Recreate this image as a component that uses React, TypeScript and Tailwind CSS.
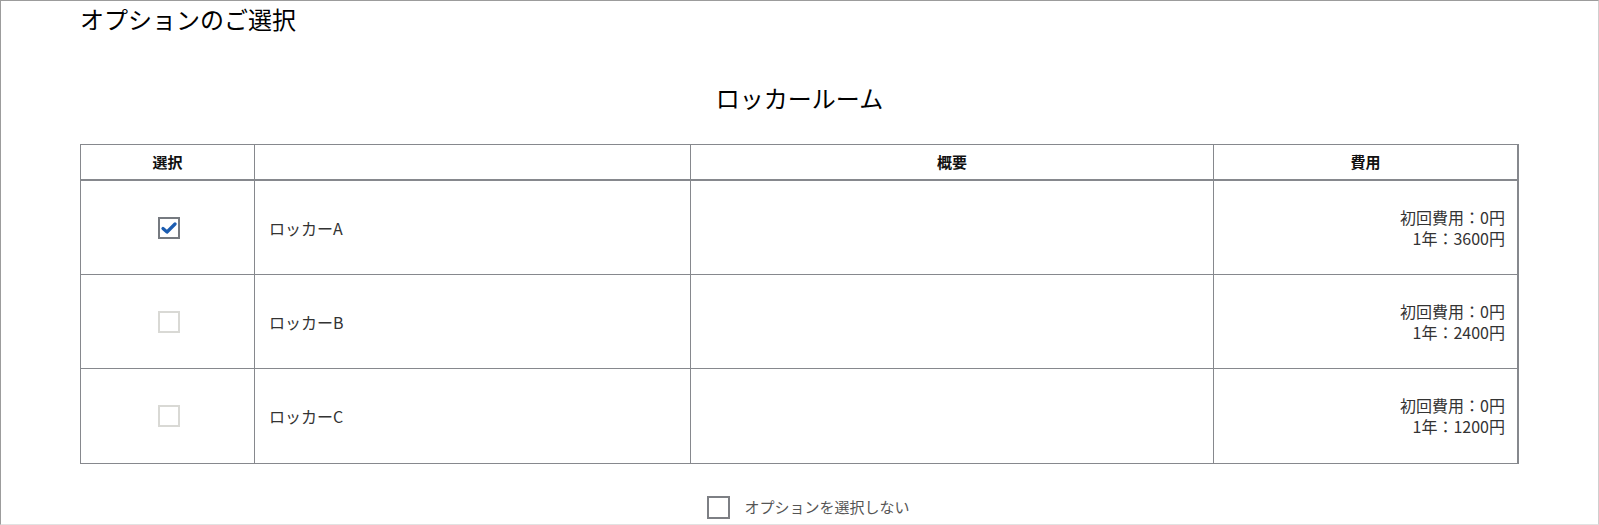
import React from "react";

const lockers = [
  { name: "ロッカーA", checked: true, yearly: "3600" },
  { name: "ロッカーB", checked: false, yearly: "2400" },
  { name: "ロッカーC", checked: false, yearly: "1200" },
];

function CheckBox({ checked }: { checked: boolean }) {
  if (checked) {
    return (
      <span className="flex h-[22px] w-[22px] items-center justify-center border-2 border-[#767a80] bg-white">
        <svg width="16" height="14" viewBox="0 0 16 14" fill="none">
          <path
            d="M2 7.5 L6 11 L14 3"
            stroke="#1b5cb0"
            strokeWidth="3.2"
            strokeLinecap="round"
            strokeLinejoin="round"
          />
        </svg>
      </span>
    );
  }
  return <span className="block h-[22px] w-[22px] border-2 border-[#d9d9d5] bg-white" />;
}

export default function App() {
  return (
    <div
      className="h-[525px] w-full overflow-hidden border border-t-[#9c9c9c] border-l-[#9c9c9c] border-r-[#cfcfcf] border-b-[#e2e2e2] bg-white text-[#222]"
      style={{ fontFamily: '"Noto Sans CJK JP", "Noto Sans", sans-serif' }}
    >
      <h1 className="ml-[79px] h-[35px] text-[24px] leading-[35px] text-black">オプションのご選択</h1>

      <h2 className="mt-[44px] text-center text-[24px] leading-[36px] text-black">ロッカールーム</h2>

      <div className="mx-[79px] mt-[28px] border border-r-2 border-[#86888d]">
        <div className="grid h-[36px] grid-cols-[174px_436px_523px_1fr] border-b-2 border-[#86888d] text-[15px] font-bold text-[#111]">
          <div className="flex items-center justify-center border-r border-[#86888d]">選択</div>
          <div className="border-r border-[#86888d]" />
          <div className="flex items-center justify-center border-r border-[#86888d]">概要</div>
          <div className="flex items-center justify-center">費用</div>
        </div>

        {lockers.map((l, i) => (
          <div
            key={l.name}
            className={
              "grid h-[94px] grid-cols-[174px_436px_523px_1fr] text-[16px] text-[#333] " +
              (i < lockers.length - 1 ? "border-b border-[#86888d]" : "")
            }
          >
            <div className="flex items-center justify-center border-r border-[#86888d] pl-[2px]">
              <CheckBox checked={l.checked} />
            </div>
            <div className="flex items-center border-r border-[#86888d] pl-[14px]">{l.name}</div>
            <div className="border-r border-[#86888d]" />
            <div className="flex flex-col items-end justify-center pr-[12px] leading-[21px]">
              <span>初回費用：0円</span>
              <span>1年：{l.yearly}円</span>
            </div>
          </div>
        ))}
      </div>

      <label className="mt-[32px] flex items-center justify-center gap-[14px] pl-[18px] text-[15px] text-[#555]">
        <span className="block h-[23px] w-[23px] border-2 border-[#7d7f84] bg-white" />
        <span>オプションを選択しない</span>
      </label>
    </div>
  );
}
